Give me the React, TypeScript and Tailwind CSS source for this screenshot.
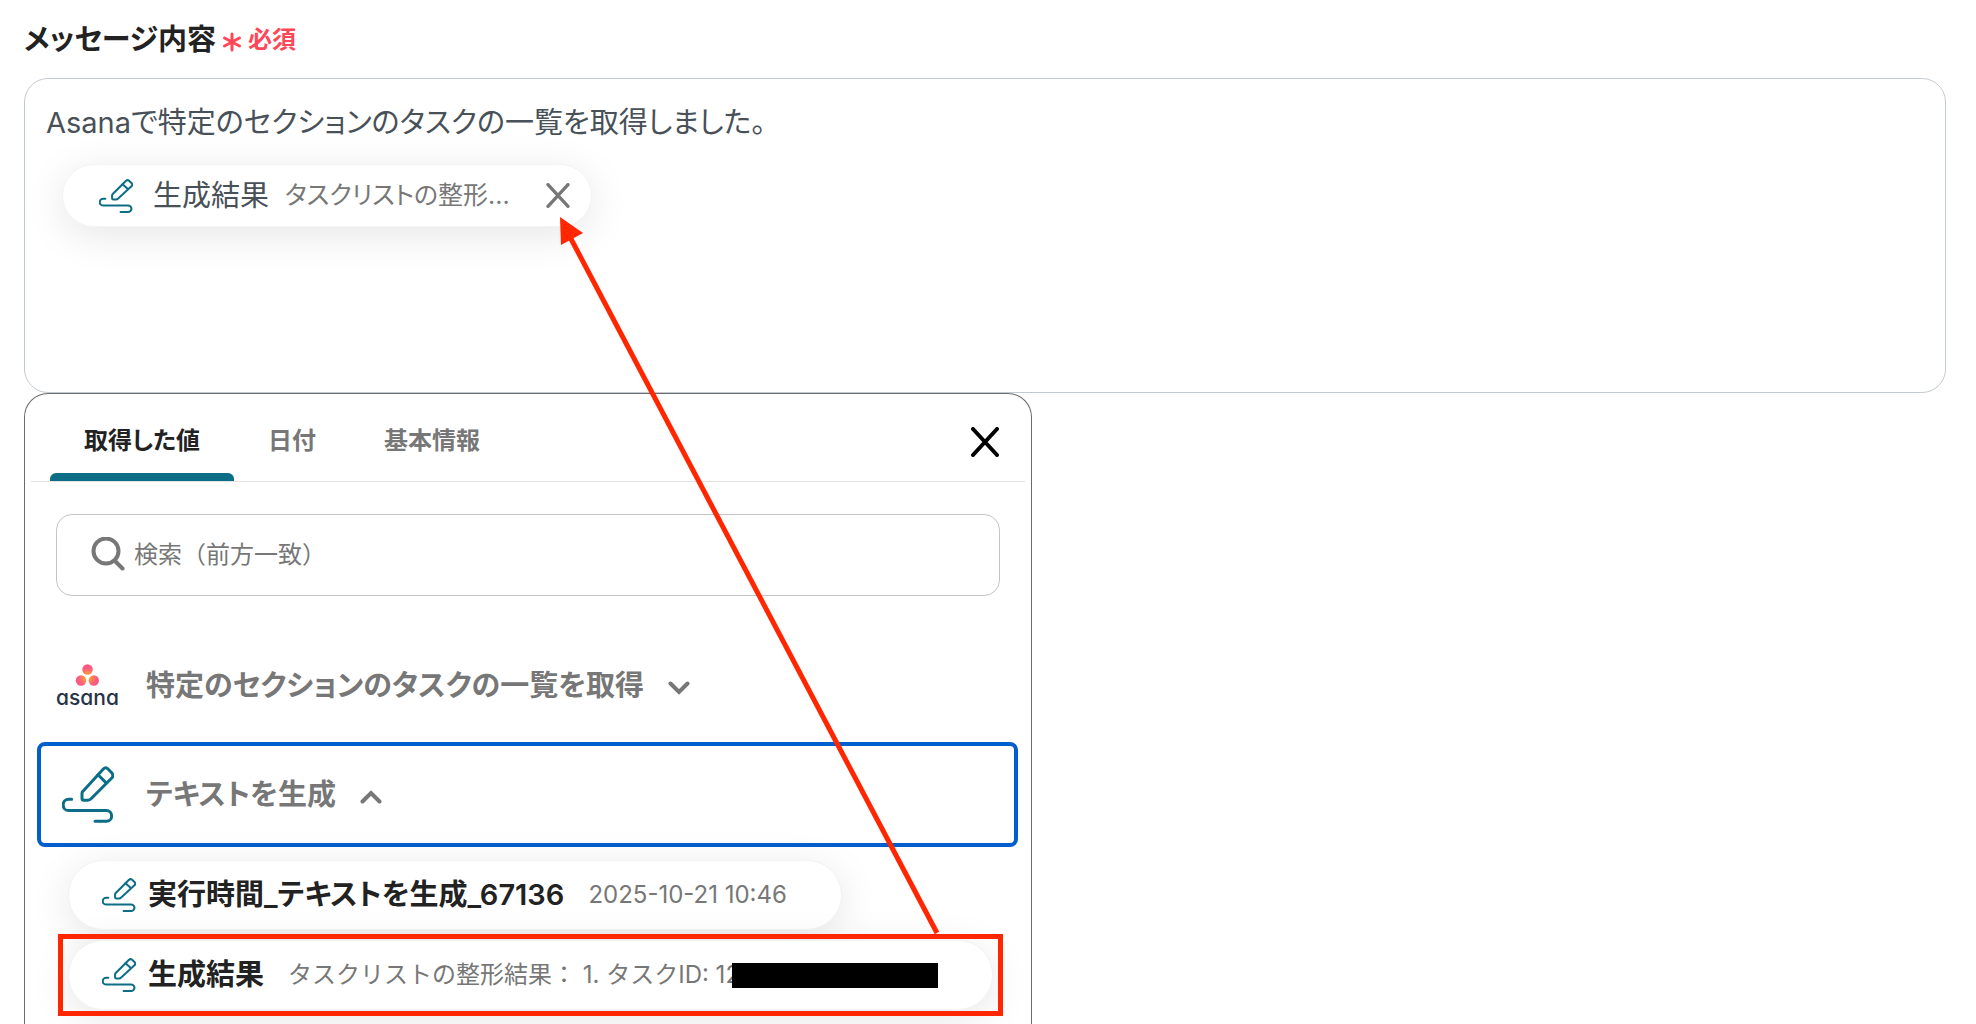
import { useState } from 'react';

const TABS = ['取得した値', '日付', '基本情報'];

function PenIcon({ className, stroke }: { className: string; stroke: number }) {
  return (
    <svg
      viewBox="0 0 156 170"
      preserveAspectRatio="none"
      className={className}
      fill="none"
      stroke="#0b6e86"
      strokeWidth={stroke}
      strokeLinecap="round"
      strokeLinejoin="round"
      aria-hidden="true"
    >
      <path vectorEffect="non-scaling-stroke" d="M60 82Q60 78 63 75L124 9Q131 2 138 9L149 20Q156 28 150 35L88 97Q83 102 78 102H66Q60 102 60 96Z" />
      <path vectorEffect="non-scaling-stroke" d="M108 26L131 49" />
      <path vectorEffect="non-scaling-stroke" d="M29 99H20a16.500 17 0 0 0 0 34H133a16 16 0 0 1 0 32H99" />
    </svg>
  );
}

function CrossIcon({ className, stroke }: { className: string; stroke: number }) {
  return (
    <svg viewBox="0 0 28 30" className={className} fill="none" stroke="currentColor" strokeWidth={stroke} strokeLinecap="round" aria-hidden="true">
      <path d="M2 2L26 28M26 2L2 28" />
    </svg>
  );
}

function AsanaLogo() {
  return (
    <svg viewBox="0 0 61 42" className="mr-1 h-[42px] w-[61px] shrink-0 overflow-visible" role="img" aria-label="asana">
      <defs>
        <radialGradient id="asana-dots" gradientUnits="userSpaceOnUse" cx="30.500" cy="12" r="13">
          <stop offset="0" stopColor="#ffb900" />
          <stop offset="0.200" stopColor="#ff9a3c" />
          <stop offset="0.700" stopColor="#fc5a80" />
          <stop offset="1" stopColor="#fb5788" />
        </radialGradient>
      </defs>
      <g fill="url(#asana-dots)">
        <circle cx="30.500" cy="4.500" r="5.200" />
        <circle cx="24" cy="15.500" r="5.200" />
        <circle cx="36.800" cy="15.500" r="5.200" />
      </g>
      <text x="30.500" y="40" textAnchor="middle" fill="#273347" className="font-['Inter',sans-serif] text-[21px] font-medium [font-feature-settings:'cv11']">
        asana
      </text>
    </svg>
  );
}

function Chevron({ up }: { up?: boolean }) {
  return (
    <svg viewBox="0 0 22 14" className="mt-1 h-3.5 w-[22px] shrink-0" fill="none" stroke="currentColor" strokeWidth="4" strokeLinecap="round" strokeLinejoin="miter" aria-hidden="true">
      <path d={up ? 'M2.500 11.500L11 3L19.500 11.500' : 'M2.500 2.500L11 11L19.500 2.500'} />
    </svg>
  );
}

const pill = 'flex items-center rounded-full border border-[#f3f3f3] bg-white shadow-[0_8px_40px_rgba(0,0,0,0.100)]';

export default function App() {
  const [tab, setTab] = useState(TABS[0]);
  const [message, setMessage] = useState('Asanaで特定のセクションのタスクの一覧を取得しました。');
  const [keyword, setKeyword] = useState('');

  return (
    <div className="relative flex min-h-screen flex-col overflow-hidden bg-white px-6 font-['Inter','Noto_Sans_CJK_JP',sans-serif] text-[#222] [font-feature-settings:'palt']">
      <div className="flex items-center gap-1.5 pt-5 pb-[18px]">
        <label htmlFor="message" className="text-[29px] leading-10 font-semibold">メッセージ内容</label>
        <span className="flex items-center gap-1.5 text-2xl font-semibold text-[#ff4757]">
          <svg viewBox="0 0 20 20" className="mt-1 size-5" stroke="currentColor" strokeWidth="3" strokeLinecap="round" aria-hidden="true">
            <path d="M10 2V18M2.500 6L17.500 14M17.500 6L2.500 14" />
          </svg>
          必須
        </span>
      </div>

      <div className="mr-1.5 min-h-[315px] rounded-3xl border border-[#c3cbd2] px-[21px] pt-6">
        <textarea
          id="message"
          rows={1}
          value={message}
          onChange={e => setMessage(e.target.value)}
          className="block h-10 w-full resize-none overflow-hidden text-[29px] leading-10 text-[#485058] outline-none"
        />
        <div className={`${pill} mt-[21px] ml-4 h-[63px] w-fit px-[21px] pl-9 whitespace-nowrap`}>
          <PenIcon className="size-[34px]" stroke={2} />
          <span className="ml-5 text-[29px] leading-10 text-[#485058]">生成結果</span>
          <span className="ml-4 text-[25px] text-[#777]">タスクリストの整形...</span>
          <button aria-label="削除" className="ml-9 text-[#777]">
            <CrossIcon className="h-[25px] w-6" stroke={4} />
          </button>
        </div>
      </div>

      {/* edge of the card that lies under the popover */}
      <div className="pointer-events-none absolute top-[600px] left-0 h-36 w-6 bg-[radial-gradient(closest-side_at_100%_50%,rgba(0,0,0,0.050),transparent)]" />

      <div className="relative w-[1008px] max-w-full flex-1 rounded-t-3xl border border-b-0 border-[#6b6b6b] bg-white">
        <div className="mx-1.5 flex h-[88px] items-stretch justify-between border-b border-[#e2e2e2] pr-[26px] pl-[19px]">
          <div role="tablist" className="flex">
            {TABS.map(t => (
              <button
                key={t}
                role="tab"
                aria-selected={t === tab}
                onClick={() => setTab(t)}
                className={t === tab ? 'flex flex-col font-semibold text-[#222]' : 'flex flex-col font-semibold text-[#777]'}
              >
                <span className="flex flex-1 items-center px-[34px] pt-3.5 text-2xl">{t}</span>
                <span className={t === tab ? 'h-2 w-full rounded-t-md bg-[#0b6e86]' : 'h-2 w-full'} />
              </button>
            ))}
          </div>
          <button aria-label="閉じる" className="pt-2 text-black">
            <CrossIcon className="h-[30px] w-7" stroke={4} />
          </button>
        </div>

        <label className="mx-[31px] mt-8 flex h-[82px] items-center gap-[9px] rounded-2xl border border-[#c4c4c4] px-[34px] text-[#777]">
          <svg viewBox="0 0 34 36" className="h-9 w-[34px] shrink-0" fill="none" stroke="currentColor" strokeLinecap="round" aria-hidden="true">
            <circle cx="15" cy="14" r="12.500" strokeWidth="4" />
            <path d="M24 24L31.500 31.500" strokeWidth="4" />
          </svg>
          <input
            type="text"
            aria-label="検索"
            value={keyword}
            onChange={e => setKeyword(e.target.value)}
            placeholder="検索（前方一致）"
            className="min-w-0 flex-1 text-2xl outline-none [font-feature-settings:normal] placeholder:text-[#777]"
          />
        </label>

        <div className="mr-[13px] mt-[38px] ml-3 flex flex-col gap-1 text-[#777]">
          <button aria-expanded="false" className="flex h-[104px] items-center gap-6 border-4 border-transparent pl-4 text-[29px] font-semibold">
            <AsanaLogo />
            特定のセクションのタスクの一覧を取得
            <Chevron />
          </button>
          <button aria-expanded="true" className="flex h-[105px] items-center gap-6 rounded-lg border-4 border-[#005fcc] pl-4 text-[29px] font-semibold">
            <span className="mr-1 flex w-[61px] justify-center">
              <PenIcon className="h-[57px] w-[52px]" stroke={3} />
            </span>
            テキストを生成
            <Chevron up />
          </button>
        </div>

        <div className="mt-[13px] ml-[43px] flex flex-col items-start gap-2.5 whitespace-nowrap">
          <button className={`${pill} h-[70px] pr-[54px] pl-[33px]`}>
            <PenIcon className="size-[34px]" stroke={2} />
            <span className="ml-3 text-[29px] font-semibold">実行時間_テキストを生成_67136</span>
            <span className="ml-6 text-2xl text-[#777]">2025-10-21 10:46</span>
          </button>
          <div className="relative">
            <button className={`${pill} h-[70px] pr-[54px] pl-[33px]`}>
              <PenIcon className="size-[34px]" stroke={2} />
              <span className="ml-3 text-[29px] font-semibold">生成結果</span>
              <span className="ml-6 text-2xl text-[#777] [font-feature-settings:normal]">タスクリストの整形結果： 1. タスクID: 12</span>
              <span className="-ml-2 h-[25px] w-[206px] bg-black" />
            </button>
            <div className="pointer-events-none absolute -inset-x-2.5 -top-1.5 -bottom-1.5 border-[5px] border-[#ff2600]" />
          </div>
        </div>
      </div>

      <svg viewBox="0 0 390 724" className="pointer-events-none absolute top-[213px] left-[556px] h-[724px] w-[390px]" aria-hidden="true">
        <path d="M14 24L381 720" stroke="#ff2600" strokeWidth="5" />
        <path d="M4 4L27 20L5 32Z" fill="#ff2600" />
      </svg>
    </div>
  );
}
